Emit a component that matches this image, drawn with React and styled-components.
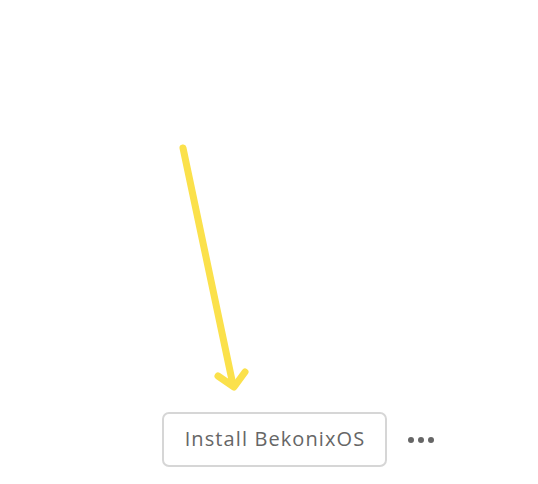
import React from 'react';
import styled, { createGlobalStyle } from 'styled-components';

const GlobalStyle = createGlobalStyle`
  html, body {
    margin: 0;
    padding: 0;
    background: #ffffff;
  }
  body {
    font-family: "Open Sans", "Liberation Sans", sans-serif;
  }
`;

const Page = styled.div`
  width: 538px;
  height: 484px;
  display: flex;
  flex-direction: column;
  box-sizing: border-box;
  padding-top: 140px;
  overflow: hidden;
`;

const Arrow = styled.svg`
  display: block;
  margin-left: 175px;
  width: 80px;
  height: 255px;
`;

const ActionRow = styled.div`
  display: flex;
  align-items: center;
  gap: 21px;
  margin-top: 17px;
  margin-left: 162px;
`;

const InstallButton = styled.button`
  box-sizing: border-box;
  width: 225px;
  height: 55px;
  padding: 0 0 2px 1px;
  border: 2px solid #d6d6d6;
  border-radius: 7px;
  background: #ffffff;
  color: #666666;
  font-family: "Open Sans", "Liberation Sans", sans-serif;
  font-size: 20px;
  letter-spacing: 1.1px;
  cursor: pointer;
`;

const MoreButton = styled.button`
  display: flex;
  align-items: center;
  gap: 4px;
  padding: 0;
  border: none;
  background: none;
  cursor: pointer;
`;

const Dot = styled.span`
  width: 6px;
  height: 6px;
  border-radius: 50%;
  background: #666666;
`;

export default function App() {
  return (
    <>
      <GlobalStyle />
      <Page>
        <Arrow viewBox="0 0 80 255" fill="none">
          <g stroke="#fbe14b" strokeWidth="7" strokeLinecap="round" strokeLinejoin="round">
            <path d="M8 8 L58 245" />
            <path d="M43 236 L59 247 L70 232" />
          </g>
        </Arrow>
        <ActionRow>
          <InstallButton>Install BekonixOS</InstallButton>
          <MoreButton aria-label="More">
            <Dot />
            <Dot />
            <Dot />
          </MoreButton>
        </ActionRow>
      </Page>
    </>
  );
}
